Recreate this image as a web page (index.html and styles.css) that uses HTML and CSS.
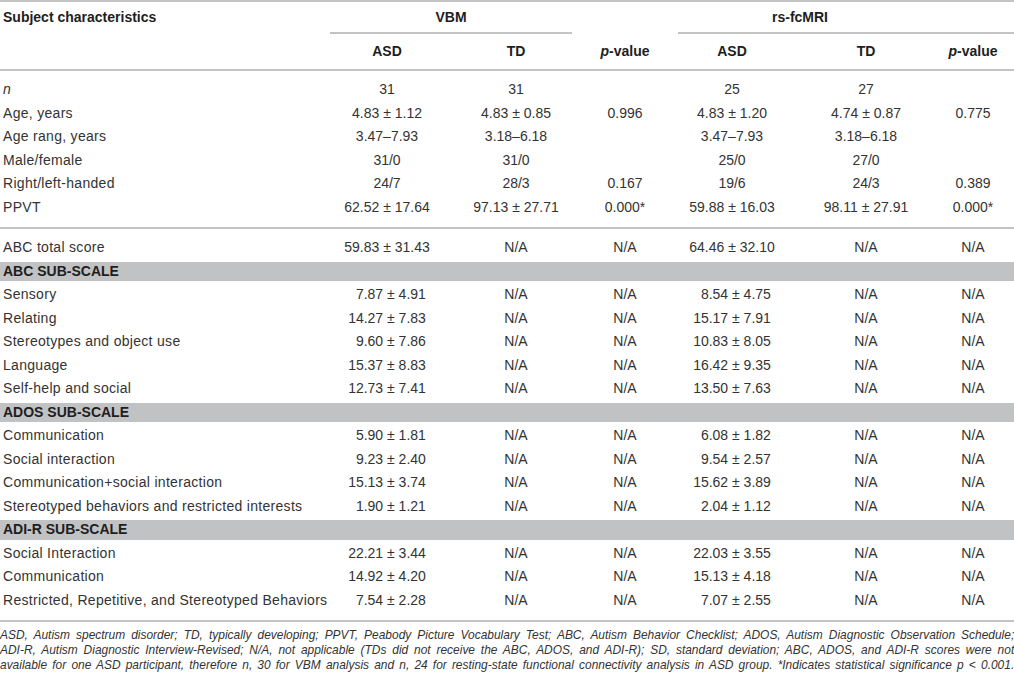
FILE: index.html
```html
<!DOCTYPE html>
<html>
  <head>
    <meta charset="utf-8">
    <title>Subject characteristics</title>
    <link rel="stylesheet" href="styles.css">
  </head>
  <body>
    <table class="chars">
      <colgroup>
        <col class="c-label">
        <col class="c-asd">
        <col class="c-td">
        <col class="c-p">
        <col class="c-asd2">
        <col class="c-td2">
        <col class="c-p2">
      </colgroup>
      <thead>
        <tr class="head-top">
          <th class="label">Subject characteristics</th>
          <th colspan="2" class="group"><div class="group-label vbm">VBM</div></th>
          <th></th>
          <th colspan="3" class="group"><div class="group-label rs">rs-fcMRI</div></th>
        </tr>
        <tr class="head-sub">
          <th></th>
          <th>ASD</th>
          <th>TD</th>
          <th><i>p</i>-value</th>
          <th>ASD</th>
          <th>TD</th>
          <th><i>p</i>-value</th>
        </tr>
      </thead>
      <tbody>
        <tr class="first">
          <td class="label"><i>n</i></td>
          <td>31</td><td>31</td><td></td><td>25</td><td>27</td><td></td>
        </tr>
        <tr>
          <td class="label">Age, years</td>
          <td>4.83 &plusmn; 1.12</td><td>4.83 &plusmn; 0.85</td><td>0.996</td>
          <td>4.83 &plusmn; 1.20</td><td>4.74 &plusmn; 0.87</td><td>0.775</td>
        </tr>
        <tr>
          <td class="label">Age rang, years</td>
          <td>3.47&ndash;7.93</td><td>3.18&ndash;6.18</td><td></td>
          <td>3.47&ndash;7.93</td><td>3.18&ndash;6.18</td><td></td>
        </tr>
        <tr>
          <td class="label">Male/female</td>
          <td>31/0</td><td>31/0</td><td></td><td>25/0</td><td>27/0</td><td></td>
        </tr>
        <tr>
          <td class="label">Right/left-handed</td>
          <td>24/7</td><td>28/3</td><td>0.167</td><td>19/6</td><td>24/3</td><td>0.389</td>
        </tr>
        <tr class="last">
          <td class="label">PPVT</td>
          <td>62.52 &plusmn; 17.64</td><td>97.13 &plusmn; 27.71</td><td>0.000*</td>
          <td>59.88 &plusmn; 16.03</td><td>98.11 &plusmn; 27.91</td><td>0.000*</td>
        </tr>
      </tbody>
      <tbody>
        <tr class="first">
          <td class="label">ABC total score</td>
          <td>59.83 &plusmn; 31.43</td><td>N/A</td><td>N/A</td>
          <td>64.46 &plusmn; 32.10</td><td>N/A</td><td>N/A</td>
        </tr>
        <tr class="band">
          <td colspan="7">ABC SUB-SCALE</td>
        </tr>
        <tr>
          <td class="label">Sensory</td>
          <td>&#8199;7.87 &plusmn; 4.91</td><td>N/A</td><td>N/A</td>
          <td>&#8199;8.54 &plusmn; 4.75</td><td>N/A</td><td>N/A</td>
        </tr>
        <tr>
          <td class="label">Relating</td>
          <td>14.27 &plusmn; 7.83</td><td>N/A</td><td>N/A</td>
          <td>15.17 &plusmn; 7.91</td><td>N/A</td><td>N/A</td>
        </tr>
        <tr>
          <td class="label">Stereotypes and object use</td>
          <td>&#8199;9.60 &plusmn; 7.86</td><td>N/A</td><td>N/A</td>
          <td>10.83 &plusmn; 8.05</td><td>N/A</td><td>N/A</td>
        </tr>
        <tr>
          <td class="label">Language</td>
          <td>15.37 &plusmn; 8.83</td><td>N/A</td><td>N/A</td>
          <td>16.42 &plusmn; 9.35</td><td>N/A</td><td>N/A</td>
        </tr>
        <tr>
          <td class="label">Self-help and social</td>
          <td>12.73 &plusmn; 7.41</td><td>N/A</td><td>N/A</td>
          <td>13.50 &plusmn; 7.63</td><td>N/A</td><td>N/A</td>
        </tr>
        <tr class="band">
          <td colspan="7">ADOS SUB-SCALE</td>
        </tr>
        <tr>
          <td class="label">Communication</td>
          <td>&#8199;5.90 &plusmn; 1.81</td><td>N/A</td><td>N/A</td>
          <td>&#8199;6.08 &plusmn; 1.82</td><td>N/A</td><td>N/A</td>
        </tr>
        <tr>
          <td class="label">Social interaction</td>
          <td>&#8199;9.23 &plusmn; 2.40</td><td>N/A</td><td>N/A</td>
          <td>&#8199;9.54 &plusmn; 2.57</td><td>N/A</td><td>N/A</td>
        </tr>
        <tr>
          <td class="label">Communication+social interaction</td>
          <td>15.13 &plusmn; 3.74</td><td>N/A</td><td>N/A</td>
          <td>15.62 &plusmn; 3.89</td><td>N/A</td><td>N/A</td>
        </tr>
        <tr>
          <td class="label">Stereotyped behaviors and restricted interests</td>
          <td>&#8199;1.90 &plusmn; 1.21</td><td>N/A</td><td>N/A</td>
          <td>&#8199;2.04 &plusmn; 1.12</td><td>N/A</td><td>N/A</td>
        </tr>
        <tr class="band">
          <td colspan="7">ADI-R SUB-SCALE</td>
        </tr>
        <tr>
          <td class="label">Social Interaction</td>
          <td>22.21 &plusmn; 3.44</td><td>N/A</td><td>N/A</td>
          <td>22.03 &plusmn; 3.55</td><td>N/A</td><td>N/A</td>
        </tr>
        <tr>
          <td class="label">Communication</td>
          <td>14.92 &plusmn; 4.20</td><td>N/A</td><td>N/A</td>
          <td>15.13 &plusmn; 4.18</td><td>N/A</td><td>N/A</td>
        </tr>
        <tr class="last">
          <td class="label">Restricted, Repetitive, and Stereotyped Behaviors</td>
          <td>&#8199;7.54 &plusmn; 2.28</td><td>N/A</td><td>N/A</td>
          <td>&#8199;7.07 &plusmn; 2.55</td><td>N/A</td><td>N/A</td>
        </tr>
      </tbody>
    </table>

    <div class="notes">
      <p class="note">ASD, Autism spectrum disorder; TD, typically developing; PPVT, Peabody Picture Vocabulary Test; ABC, Autism Behavior Checklist; ADOS, Autism Diagnostic Observation Schedule;<br>
      ADI-R, Autism Diagnostic Interview-Revised; N/A, not applicable (TDs did not receive the ABC, ADOS, and ADI-R); SD, standard deviation; ABC, ADOS, and ADI-R scores were not<br>
      available for one ASD participant, therefore n, 30 for VBM analysis and n, 24 for resting-state functional connectivity analysis in ASD group. *Indicates statistical significance p &lt; 0.001.</p>
    </div>
  </body>
</html>
```

FILE: styles.css
```css
* {
  box-sizing: border-box;
}

body {
  margin: 0;
  padding: 0;
  font-family: 'Liberation Sans', Arial, Helvetica, sans-serif;
  font-size: 14px;
  color: #333;
  background: #fff;
}

.chars {
  width: 1014px;
  table-layout: fixed;
  border-collapse: separate;
  border-spacing: 0;
  border-top: 2px solid #c4c4c4;
}

.c-label { width: 328px; }
.c-asd { width: 118px; }
.c-td { width: 140px; }
.c-p { width: 78px; }
.c-asd2 { width: 136px; }
.c-td2 { width: 132px; }
.c-p2 { width: 82px; }

th {
  font-weight: bold;
  color: #1e1e1e;
  text-align: center;
  padding: 0;
}

th.label,
td.label {
  text-align: left;
  padding-left: 3px;
}

td.label {
  letter-spacing: .3px;
}

.head-top th {
  line-height: 30px;
  height: 32px;
  vertical-align: top;
}

.group-label {
  line-height: 30px;
  border-bottom: 2px solid #c4c4c4;
}

.vbm {
  margin: 0 14px 0 2px;
}

.rs {
  margin-left: 14px;
  padding-right: 92px;
}

.head-sub th {
  line-height: 35px;
  border-bottom: 2px solid #c4c4c4;
}

td {
  padding: 0;
  line-height: 23.5px;
  text-align: center;
  white-space: nowrap;
}

tr.first td {
  padding-top: 7px;
}

tr.last td {
  padding-bottom: 8px;
  border-bottom: 2px solid #c4c4c4;
}

tr.band td {
  background-color: #c1c2c4;
  border-top: 2px solid #fff;
  border-bottom: 2px solid #fff;
  line-height: 19.5px;
  text-align: left;
  padding-left: 3px;
  font-weight: bold;
  color: #1e1e1e;
}

.notes {
  width: 1014px;
  overflow: hidden;
  padding-top: 5px;
}

.note {
  margin: 0;
  width: 1146px;
  font-size: 13.5px;
  line-height: 15px;
  font-style: italic;
  color: #333;
  text-align: justify;
  text-align-last: justify;
  transform: scaleX(.885);
  transform-origin: 0 0;
}
```
